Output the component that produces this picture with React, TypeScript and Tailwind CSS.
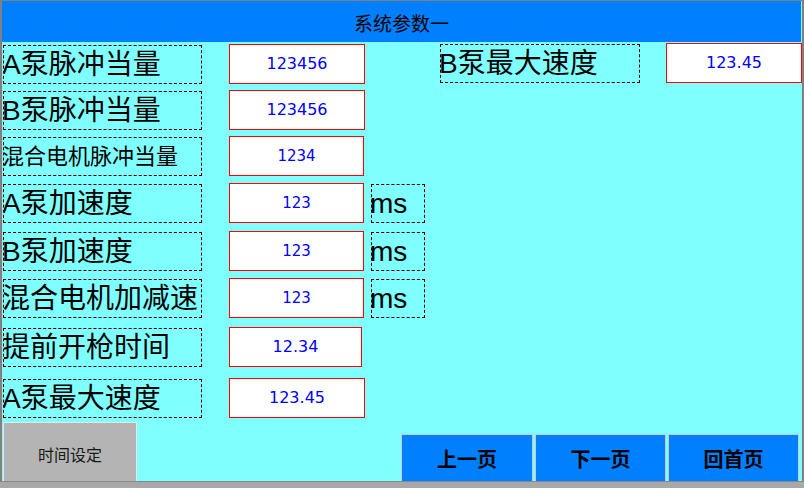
import React from "react";

const labelFont = "font-['Liberation_Sans','Noto_Sans_CJK_SC',sans-serif]";

function Label({ text, small, w = "w-[199px]", extra = "" }: { text: string; small?: boolean; w?: string; extra?: string }) {
  return (
    <div
      className={`${w} h-[39px] border border-dashed border-black flex items-center overflow-hidden whitespace-nowrap leading-none text-black ${labelFont} ${
        small ? "text-[22px]" : "text-[28px]"
      } ${extra}`}
    >
      <span className="-ml-[2px]">{text}</span>
    </div>
  );
}

function Field({ value, w = "w-[136px]", size = "text-[16px]", extra = "" }: { value: string; w?: string; size?: string; extra?: string }) {
  return (
    <div
      className={`${w} h-[40px] bg-white border border-[#ff0000] flex items-center justify-center text-[#0000ff] leading-none font-['DejaVu_Sans',sans-serif] ${size} ${extra}`}
    >
      {value}
    </div>
  );
}

function Unit() {
  return (
    <div className={`ml-[7px] w-[54px] h-[39px] border border-dashed border-black flex items-center leading-none text-[28px] text-black ${labelFont}`}>
      <span className="-ml-[2px]">ms</span>
    </div>
  );
}

export default function App() {
  return (
    <div className="w-[804px] h-[488px] bg-[#a8a8a8] flex flex-col overflow-hidden">
      <div className="h-[481px] flex flex-col bg-[#80ffff] border-t border-l-2 border-r-2 border-[#808080]">
        {/* header */}
        <div className="h-[41px] mr-px bg-[#0080ff] flex items-center justify-center text-black text-[19px] leading-none font-['Noto_Sans_CJK_SC',sans-serif]">
          <span className="mt-[2px]">系统参数一</span>
        </div>

        {/* row 1 */}
        <div className="mt-px flex items-start">
          <Label text="A泵脉冲当量" extra="ml-px mt-[2px]" />
          <Field value="123456" extra="ml-[27px] mt-px" />
          <Label text="B泵最大速度" w="w-[200px]" extra="ml-[75px] mt-px" />
          <Field value="123.45" extra="ml-[26px]" />
        </div>

        {/* row 2 */}
        <div className="mt-[6px] h-[40px] flex items-end">
          <Label text="B泵脉冲当量" extra="ml-px" />
          <Field value="123456" extra="ml-[27px]" />
        </div>

        {/* row 3 */}
        <div className="mt-[6px] h-[40px] flex items-end">
          <Label text="混合电机脉冲当量" small extra="ml-px" />
          <Field value="1234" w="w-[135px]" size="text-[15px]" extra="ml-[27px]" />
        </div>

        {/* row 4 */}
        <div className="mt-[7px] h-[40px] flex items-end">
          <Label text="A泵加速度" extra="ml-px" />
          <Field value="123" w="w-[135px]" size="text-[15px]" extra="ml-[27px]" />
          <Unit />
        </div>

        {/* row 5 */}
        <div className="mt-[8px] h-[40px] flex items-end">
          <Label text="B泵加速度" extra="ml-px" />
          <Field value="123" w="w-[135px]" size="text-[15px]" extra="ml-[27px]" />
          <Unit />
        </div>

        {/* row 6 */}
        <div className="mt-[7px] h-[40px] flex items-end">
          <Label text="混合电机加减速" extra="ml-px" />
          <Field value="123" w="w-[135px]" size="text-[15px]" extra="ml-[27px]" />
          <Unit />
        </div>

        {/* row 7 */}
        <div className="mt-[9px] h-[40px] flex items-end">
          <Label text="提前开枪时间" extra="ml-px" />
          <Field value="12.34" w="w-[133px]" extra="ml-[27px]" />
        </div>

        {/* row 8 */}
        <div className="mt-[11px] h-[40px] flex items-end">
          <Label text="A泵最大速度" extra="ml-px" />
          <Field value="123.45" extra="ml-[27px]" />
        </div>

        {/* bottom buttons */}
        <div className="mt-auto flex items-end justify-between">
          <div className="ml-px w-[134px] h-[59px] bg-[#b4b4b4] border-t border-l border-r border-[#e6e6e6] flex items-center justify-center text-[16px] leading-none text-[#181818] font-['Noto_Sans_CJK_SC',sans-serif]">
            <span className="mt-[3px]">时间设定</span>
          </div>
          <div className="mr-[3px] flex items-end gap-[2px]">
            {[
              ["上一页", "w-[132px]"],
              ["下一页", "w-[131px]"],
              ["回首页", "w-[131px]"],
            ].map(([t, w]) => (
              <div
                key={t}
                className={`${w} h-[47px] bg-[#0080ff] border-t border-l border-r border-[#c8c8c8] flex items-center justify-center text-[20px] font-bold leading-none text-black font-['Noto_Sans_CJK_SC',sans-serif]`}
              >
                <span className="mt-[1px]">{t}</span>
              </div>
            ))}
          </div>
        </div>
      </div>
      <div className="flex-1 border-t border-[#888888] bg-[#a8a8a8]" />
    </div>
  );
}
